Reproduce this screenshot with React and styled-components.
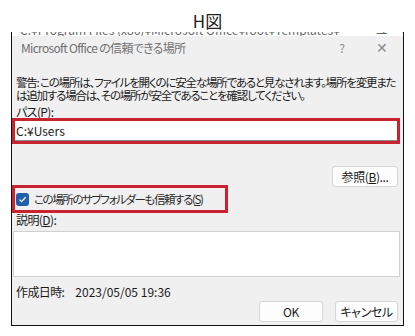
import styled, { createGlobalStyle } from 'styled-components';

const GlobalStyle = createGlobalStyle`
  body {
    margin: 0;
    background: #fff;
    font-family: "Noto Sans CJK JP", "Noto Sans", sans-serif;
  }
`;

const Page = styled.div`
  width: 415px;
  height: 336px;
  overflow: hidden;
  background: #fff;
`;

const Caption = styled.div`
  height: 32px;
  display: flex;
  align-items: center;
  justify-content: center;
  font-size: 17px;
  color: #222;
  line-height: 1;
  padding-top: 8px;
  box-sizing: border-box;
`;

const Dialog = styled.div`
  margin-left: 11px;
  width: 393px;
  box-sizing: border-box;
  border: 1.5px solid #111;
  border-top: none;
  background: #f0f0f0;
  display: flex;
  flex-direction: column;
  padding-bottom: 3px;
  font-size: 12px;
  color: #1b1b1b;
  font-feature-settings: "palt";
`;

const CutRow = styled.div`
  height: 4px;
  min-height: 0;
  flex-shrink: 0;
  overflow: hidden;
  background: #fff;
  display: flex;
  align-items: flex-end;
  color: #666;
  font-size: 12px;
  white-space: nowrap;
  padding-left: 8px;

  span {
    line-height: 12px;
    flex-shrink: 0;
  }
`;

const TitleBar = styled.div`
  height: 22px;
  display: flex;
  align-items: center;
  padding: 0 1px 0 9px;
  color: #707070;
  font-size: 12px;
`;

const TitleText = styled.span`
  flex: 1;
  letter-spacing: -0.7px;
`;

const TitleButton = styled.span`
  width: 40px;
  text-align: center;
  color: #8a8a8a;
  font-size: ${p => p.$size || 12}px;
`;

const Warning = styled.div`
  margin-top: 18px;
  padding-left: 4px;
  font-size: 11.5px;
  line-height: 13px;
  letter-spacing: -1.2px;

  span {
    display: block;
    white-space: nowrap;
  }
`;

const Label = styled.div`
  margin-top: ${p => p.$top || 0}px;
  padding-left: 4px;
  line-height: 12px;
  height: 12px;
  white-space: nowrap;
  letter-spacing: -0.6px;
`;

const Key = styled.span`
  text-decoration: underline;
`;

const Highlight = styled.div`
  border: 3px solid #c8232e;
  box-sizing: border-box;
  height: ${p => p.$height}px;
  width: ${p => p.$width}px;
  margin-top: ${p => p.$top || 0}px;
  display: flex;
  align-items: center;
`;

const Field = styled.div`
  flex: 1;
  align-self: stretch;
  background: #fff;
  border-bottom: 1px solid #8a8a8a;
  display: flex;
  align-items: center;
  padding-left: 1px;
  font-size: 12px;
`;

const ButtonRow = styled.div`
  display: flex;
  justify-content: flex-end;
  gap: 12px;
  margin-top: ${p => p.$top || 0}px;
  padding-right: 5px;
`;

const Button = styled.div`
  width: ${p => p.$width || 64}px;
  height: 21px;
  box-sizing: border-box;
  background: #fdfdfd;
  border: 1px solid #d6d6d6;
  border-radius: 3px;
  display: flex;
  align-items: center;
  justify-content: center;
  font-size: 12px;
  color: #1b1b1b;
  letter-spacing: -0.4px;
`;

const CheckRow = styled.div`
  display: flex;
  align-items: center;
  gap: 5px;
  padding-left: 1px;
  white-space: nowrap;
  font-size: 11.5px;
  letter-spacing: -1.4px;
  color: #2a2a2a;
`;

const Check = styled.span`
  width: 13px;
  height: 13px;
  border-radius: 3px;
  background: #1f5fae;
  display: flex;
  align-items: center;
  justify-content: center;
`;

const TextArea = styled.div`
  margin-top: 5px;
  margin-left: 1px;
  width: 387px;
  height: 46px;
  box-sizing: border-box;
  background: #fff;
  border: 1px solid #d0d0d0;
`;

const Created = styled.div`
  margin-top: 8px;
  padding-left: 4px;
  height: 14px;
  line-height: 14px;
  display: flex;
  gap: 11px;

  span:first-child {
    letter-spacing: -0.6px;
  }
`;

export default function App() {
  return (
    <Page>
      <GlobalStyle />
      <Caption>H図</Caption>
      <Dialog>
        <CutRow>
          <span>C:¥Program Files (x86)¥Microsoft Office¥root¥Templates¥　　　ユーザーの場所　2023/05/05</span>
        </CutRow>
        <TitleBar>
          <TitleText>Microsoft Office の信頼できる場所</TitleText>
          <TitleButton>?</TitleButton>
          <TitleButton $size={14}>✕</TitleButton>
        </TitleBar>
        <Warning>
          <span>警告: この場所は、ファイルを開くのに安全な場所であると見なされます。場所を変更また</span>
          <span>は追加する場合は、その場所が安全であることを確認してください。</span>
        </Warning>
        <Label $top={4}>
          パス(<Key>P</Key>):
        </Label>
        <Highlight $height={26} $width={388}>
          <Field>C:¥Users</Field>
        </Highlight>
        <ButtonRow $top={22}>
          <Button $width={66}>
            参照(<Key>B</Key>)...
          </Button>
        </ButtonRow>
        <Highlight $height={28} $width={216} $top={-2}>
          <CheckRow>
            <Check>
              <svg width="9" height="9" viewBox="0 0 9 9">
                <path d="M1.5 4.6 L3.6 6.6 L7.6 2.2" fill="none" stroke="#fff" strokeWidth="1.3" />
              </svg>
            </Check>
            <span>
              この場所のサブフォルダーも信頼する(<Key>S</Key>)
            </span>
          </CheckRow>
        </Highlight>
        <Label $top={1}>
          説明(<Key>D</Key>):
        </Label>
        <TextArea />
        <Created>
          <span>作成日時:</span>
          <span>2023/05/05 19:36</span>
        </Created>
        <ButtonRow $top={2}>
          <Button $width={64}>OK</Button>
          <Button $width={63}>キャンセル</Button>
        </ButtonRow>
      </Dialog>
    </Page>
  );
}
